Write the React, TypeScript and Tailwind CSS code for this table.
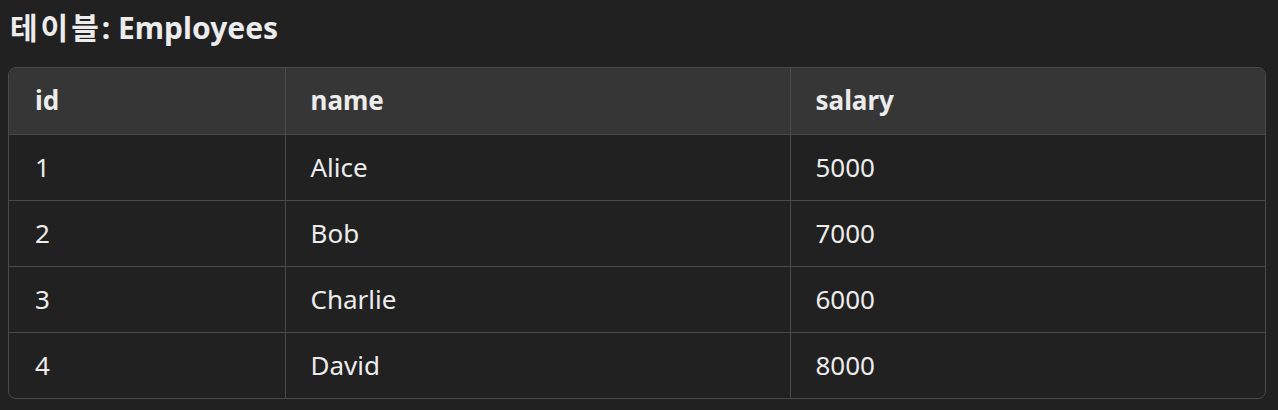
const rows = [
  { id: 1, name: "Alice", salary: 5000 },
  { id: 2, name: "Bob", salary: 7000 },
  { id: 3, name: "Charlie", salary: 6000 },
  { id: 4, name: "David", salary: 8000 },
];

export default function App() {
  return (
    <div
      className="min-h-[410px] w-full bg-[#212121] pt-[6px] text-[#ececec]"
      style={{ fontFamily: '"Noto Sans", "Noto Sans CJK KR", sans-serif' }}
    >
      <h2 className="ml-[10px] h-[44px] text-[30px] font-bold leading-[44px]">
        <span className="tracking-[3px]">테이블</span>: Employees
      </h2>

      <div className="ml-2 mr-3 mt-[17px] overflow-hidden rounded-lg border border-[#4a4a4a]">
        <table className="w-full border-collapse text-left text-[26px]">
          <thead>
            <tr className="h-[66px] bg-[#363636]">
              <th className="w-[276px] border-r border-[#4a4a4a] pl-[26px] font-bold">id</th>
              <th className="w-[505px] border-r border-[#4a4a4a] pl-[25px] font-bold">name</th>
              <th className="pl-[25px] font-bold">salary</th>
            </tr>
          </thead>
          <tbody>
            {rows.map((r) => (
              <tr key={r.id} className="h-[66px] border-t border-[#4a4a4a]">
                <td className="border-r border-[#4a4a4a] pl-[26px]">{r.id}</td>
                <td className="border-r border-[#4a4a4a] pl-[25px]">{r.name}</td>
                <td className="pl-[25px]">{r.salary}</td>
              </tr>
            ))}
          </tbody>
        </table>
      </div>
    </div>
  );
}
